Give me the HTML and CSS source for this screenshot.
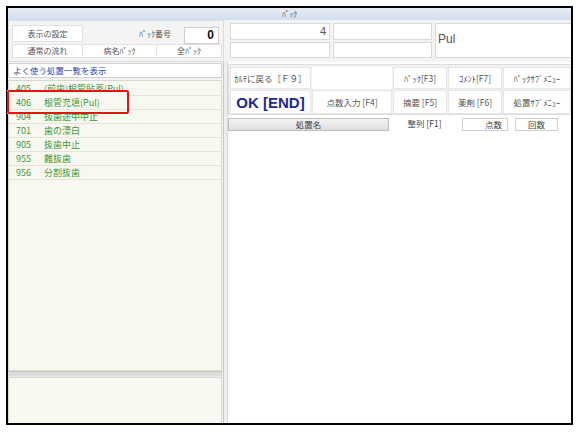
FILE: index.html
```html
<!DOCTYPE html>
<html lang="ja">
<head>
<meta charset="utf-8">
<title>ﾊﾟｯｸ</title>
<link rel="stylesheet" href="styles.css">
</head>
<body>
<div class="win">
  <div class="title">ﾊﾟｯｸ</div>
  <div class="top">
    <div class="top-left">
      <div class="tl-row1">
        <div class="cell b-setting">表示の設定</div>
        <div class="lbl">ﾊﾟｯｸ番号</div>
        <div class="num-in">0</div>
      </div>
      <div class="tl-row2">
        <div class="cell tab t1">通常の流れ</div>
        <div class="cell tab t2">病名ﾊﾟｯｸ</div>
        <div class="cell tab t3">全ﾊﾟｯｸ</div>
      </div>
    </div>
    <div class="top-right">
      <div class="fld num">4</div>
      <div class="fld"></div>
      <div class="fld big">Pul</div>
      <div class="fld"></div>
      <div class="fld"></div>
    </div>
  </div>
  <div class="main">
    <div class="left">
      <div class="list-head">よく使う処置一覧を表示</div>
      <div class="list">
        <div class="row"><span class="code">405</span><span class="name">(前歯)根管貼薬(Pul)</span></div>
        <div class="row sel"><span class="code">406</span><span class="name">根管充填(Pul)</span></div>
        <div class="row"><span class="code">904</span><span class="name">抜歯途中中止</span></div>
        <div class="row"><span class="code">701</span><span class="name">歯の漂白</span></div>
        <div class="row"><span class="code">905</span><span class="name">抜歯中止</span></div>
        <div class="row"><span class="code">955</span><span class="name">難抜歯</span></div>
        <div class="row"><span class="code">956</span><span class="name">分割抜歯</span></div>
        <div class="hl"></div>
      </div>
      <div class="splitter"></div>
      <div class="lower"></div>
    </div>
    <div class="vdiv"></div>
    <div class="right">
      <div class="btnbox">
        <div class="btn">ｶﾙﾃに戻る［Ｆ９］</div>
        <div class="btn empty"></div>
        <div class="btn">ﾊﾟｯｸ[F3]</div>
        <div class="btn">ｺﾒﾝﾄ[F7]</div>
        <div class="btn">ﾊﾟｯｸｻﾌﾞﾒﾆｭｰ</div>
        <div class="btn ok">OK [END]</div>
        <div class="btn">点数入力 [F4]</div>
        <div class="btn">摘要 [F5]</div>
        <div class="btn">薬剤 [F6]</div>
        <div class="btn">処置ｻﾌﾞﾒﾆｭｰ</div>
      </div>
      <div class="colhead">
        <div class="ch-name">処置名</div>
        <div class="ch-sort">整列 [F1]</div>
        <div class="ch-pts">点数</div>
        <div class="ch-cnt">回数</div>
      </div>
      <div class="body-area"></div>
    </div>
  </div>
</div>
</body>
</html>
```

FILE: styles.css
```css
* { box-sizing: border-box; }
html, body { margin: 0; padding: 0; background: #ffffff; }
body {
  font-family: "Noto Sans CJK JP", "Liberation Sans", sans-serif;
  color: #444;
}
.win {
  margin: 6px 0 0 6px;
  width: 567px;
  height: 419px;
  border: 2px solid #000;
  background: #f3f3f3;
  display: flex;
  flex-direction: column;
}
.title {
  height: 12px;
  background: linear-gradient(#e6edf6, #d3dfee);
  font-size: 7.5px;
  line-height: 12px;
  text-align: center;
  color: #555;
}
.top {
  height: 42px;
  display: flex;
  background: #f4f4f4;
}
.top-left {
  width: 216px;
  border: 1px solid #dcdcdc;
  padding: 4px 0 0 3px;
}
.tl-row1 { height: 19px; display: flex; align-items: flex-start; }
.cell {
  background: #fff;
  border: 1px solid #e2e2e2;
  font-size: 8px;
  color: #555;
  text-align: center;
}
.b-setting { width: 71px; height: 17px; line-height: 15px; }
.lbl {
  flex: 1;
  text-align: right;
  font-size: 8px;
  line-height: 17px;
  padding-right: 13px;
  color: #555;
}
.num-in {
  width: 35px;
  height: 17px;
  margin-top: 2px;
  margin-right: 4px;
  background: #fff;
  border: 1px solid #cfcfcf;
  font-family: "Liberation Sans", sans-serif;
  font-weight: bold;
  font-size: 12px;
  line-height: 15px;
  text-align: right;
  padding-right: 4px;
  color: #111;
}
.tl-row2 { height: 14px; display: flex; }
.tab { height: 14px; line-height: 12px; }
.t1 { width: 71px; }
.t2 { width: 74px; border-left: none; }
.t3 { width: 65px; border-left: none; }
.top-right {
  flex: 1;
  margin-left: 2px;
  padding: 3px 0 0 4px;
  display: grid;
  grid-template-columns: 100px 99px 1fr;
  grid-template-rows: 17px 16px;
  column-gap: 3px;
  row-gap: 2px;
}
.fld {
  background: #fff;
  border: 1px solid #d9d9d9;
}
.fld.num {
  font-family: "Liberation Sans", sans-serif;
  font-size: 11px;
  line-height: 15px;
  text-align: right;
  padding-right: 3px;
  color: #555;
}
.fld.big {
  grid-column: 3;
  grid-row: 1 / 3;
  border-right: none;
  font-family: "Liberation Sans", sans-serif;
  font-size: 12px;
  line-height: 31px;
  padding-left: 2px;
  color: #555;
}
.main {
  flex: 1;
  display: flex;
  min-height: 0;
}
.left {
  width: 215px;
  display: flex;
  flex-direction: column;
  padding-top: 1px;
}
.list-head {
  height: 15px;
  margin-right: 1px;
  background: #fff;
  border: 1px solid #d0d0d0;
  font-size: 8.5px;
  line-height: 13px;
  padding-left: 4px;
  color: #3548a6;
}
.list {
  position: relative;
  z-index: 0;
  margin-top: 2px;
  margin-right: 1px;
  height: 291px;
  background: #f9f8f0;
  border: 1px solid #d8d8d0;
  padding-top: 1px;
}
.row {
  height: 14px;
  border-bottom: 1px solid #e4e4dc;
  font-size: 9px;
  line-height: 13px;
  color: #3a993a;
  display: flex;
}
.row .code { width: 35px; padding-left: 7px; }
.row.sel { position: relative; z-index: 2; }
.hl {
  position: absolute;
  left: -2px;
  top: 9px;
  width: 122px;
  height: 24px;
}
.hl::before {
  content: "";
  position: absolute;
  inset: 0;
  background: #f9f8f0;
  z-index: 1;
}
.hl::after {
  content: "";
  position: absolute;
  inset: 0;
  border: 2.5px solid #e41515;
  border-radius: 2px;
  z-index: 3;
}
.splitter {
  height: 6px;
  margin-right: 1px;
  background: #dcdcdc;
  border-top: 1px solid #c9c9c9;
  border-bottom: 1px solid #e9e9e9;
}
.lower {
  flex: 1;
  margin-right: 1px;
  background: #f9f8f0;
  border: 1px solid #d8d8d0;
  border-bottom: none;
}
.vdiv {
  width: 5px;
  border-left: 1px solid #c8c8c8;
  border-right: 1px solid #d8d8d8;
  background: #eeeeee;
}
.right {
  flex: 1;
  background: #fff;
  display: flex;
  flex-direction: column;
}
.btnbox {
  margin-top: 2px;
  height: 51px;
  border: 1px solid #dedede;
  border-right: none;
  padding: 2px 0 0 1px;
  display: grid;
  grid-template-columns: 81px 80px 54px 54px 1fr;
  grid-template-rows: 22px 24px;
  gap: 1px;
  background: #f2f2f2;
}
.btn {
  background: #fff;
  border: 1px solid #e6e6e6;
  font-size: 8.5px;
  color: #555;
  display: flex;
  align-items: center;
  justify-content: center;
  white-space: nowrap;
  overflow: hidden;
}
.btn.empty { border-color: #fff; }
.btn.ok {
  font-family: "Liberation Sans", sans-serif;
  font-weight: bold;
  font-size: 15px;
  color: #1c2a8c;
}
.colhead {
  margin-top: 3px;
  height: 13px;
  display: flex;
  font-size: 8.5px;
  line-height: 11px;
  color: #444;
}
.ch-name {
  width: 161px;
  text-align: center;
  background: linear-gradient(#f3f3f3, #dedede);
  border: 1px solid #bdbdbd;
}
.ch-sort { width: 71px; text-align: center; }
.ch-pts {
  width: 46px;
  margin-left: 2px;
  border: 1px solid #cfcfcf;
  text-align: right;
  padding-right: 5px;
}
.ch-cnt {
  width: 43px;
  margin-left: 7px;
  border: 1px solid #cfcfcf;
  text-align: center;
}
.body-area { flex: 1; background: #fff; }
```
